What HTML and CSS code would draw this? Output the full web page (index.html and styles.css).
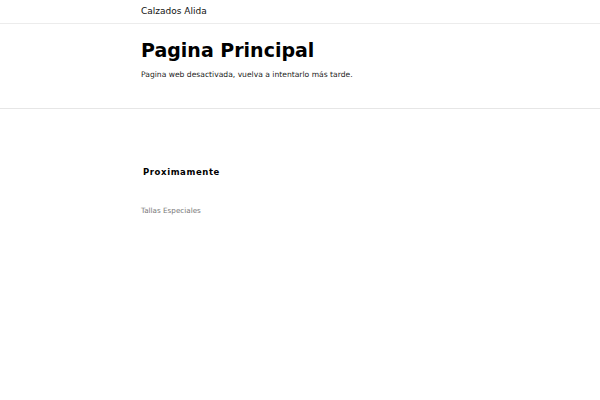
FILE: index.html
```html
<!DOCTYPE html>
<html lang="es">
<head>
<meta charset="utf-8">
<title>Calzados Alida</title>
<link rel="stylesheet" href="styles.css">
</head>
<body>
<header class="topbar">
  <div class="wrap"><span class="brand">Calzados Alida</span></div>
</header>
<section class="hero">
  <div class="wrap">
    <h1 class="title">Pagina Principal</h1>
    <p class="lead">Pagina web desactivada, vuelva a intentarlo más tarde.</p>
  </div>
</section>
<main class="content">
  <div class="wrap">
    <h2 class="soon">Proximamente</h2>
    <p class="note">Tallas Especiales</p>
  </div>
</main>
</body>
</html>
```
FILE: styles.css
```css
html, body { margin: 0; padding: 0; background: #fff; }
body { font-family: "DejaVu Sans", sans-serif; color: #111; }
.wrap { padding-left: 141px; }
.topbar { height: 23px; border-bottom: 1px solid #ececec; }
.brand { display: block; font-size: 9px; line-height: 23px; color: #111; }
.hero { height: 84px; border-bottom: 1px solid #e6e6e6; }
.title { margin: 0; padding-top: 14px; font-size: 19px; line-height: 24px; font-weight: bold; color: #000; }
.lead { margin: 7px 0 0; font-size: 7.6px; line-height: 12px; color: #222; }
.content { padding-top: 56px; }
.soon { margin: 0 0 0 2px; font-size: 8.5px; line-height: 14px; font-weight: bold; color: #000; letter-spacing: 0.6px; }
.note { margin: 27px 0 0; font-size: 7.2px; line-height: 10px; color: #777; }
```
